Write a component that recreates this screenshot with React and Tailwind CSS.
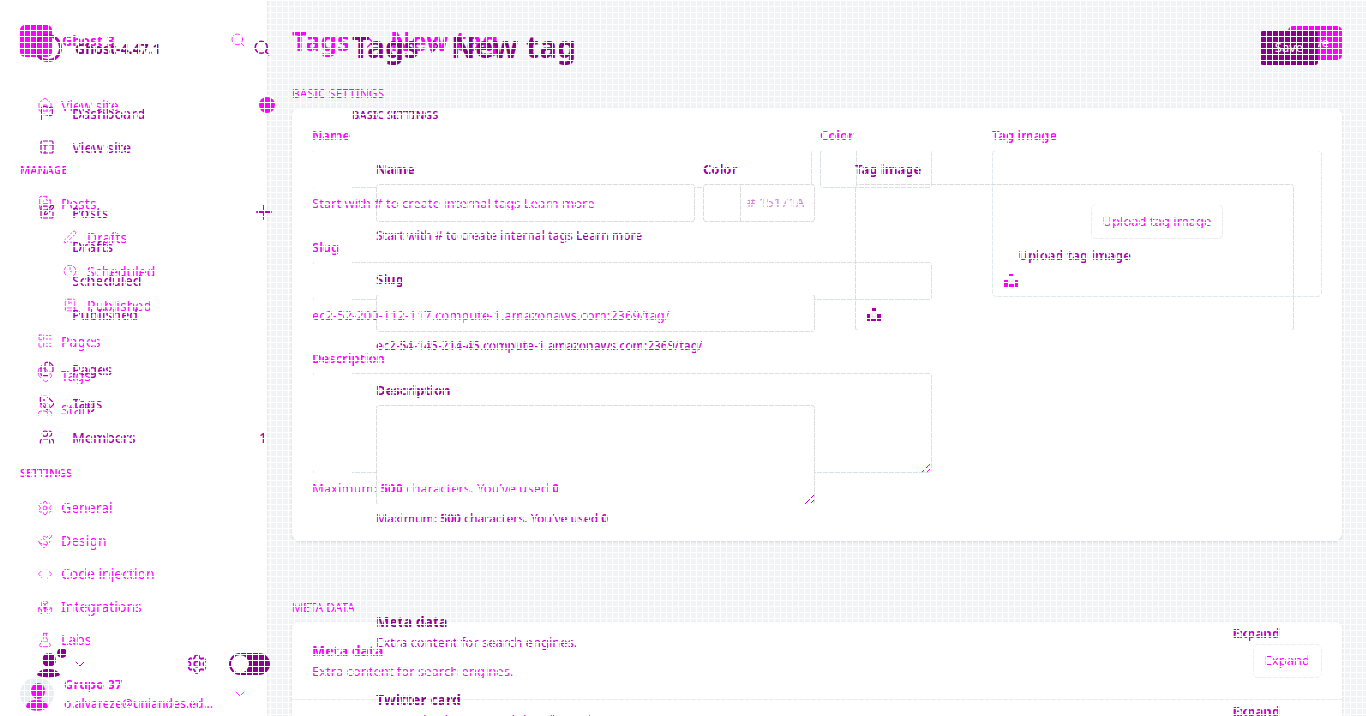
import React from "react";
import {
  Home, Search, FileText, PenLine, Clock, BookMarked, LayoutList, Tag, Users, Settings,
  Paintbrush, Code, Boxes, FlaskConical, Flag, PanelsTopLeft, SquarePen, Files, ChevronDown,
  ChevronRight, Plus,
} from "lucide-react";

const frontLinks = [
  { label: "Posts", icon: FileText },
  { label: "Drafts", icon: PenLine, sub: true },
  { label: "Scheduled", icon: Clock, sub: true },
  { label: "Published", icon: BookMarked, sub: true },
];
const frontMore = [
  { label: "Pages", icon: LayoutList },
  { label: "Tags", icon: Tag },
  { label: "Staff", icon: Users },
];
const frontSettings = [
  { label: "General", icon: Settings },
  { label: "Design", icon: Paintbrush },
  { label: "Code injection", icon: Code },
  { label: "Integrations", icon: Boxes },
  { label: "Labs", icon: FlaskConical },
];

function LightLink({ label, icon: Icon, sub, short }) {
  return (
    <a href="#" className={`flex items-center text-[14px] ${short ? "h-[33px]" : "h-[34px]"} ${sub ? "gap-2.5 pl-[63px]" : "gap-2 pl-[37px]"}`}>
      <Icon className={sub ? "size-[14px]" : "size-4"} strokeWidth={1.2} />
      <span>{label}</span>
    </a>
  );
}

function DarkLink({ label, icon: Icon, end }) {
  return (
    <a href="#" className="flex h-[34px] items-center pl-[39px] text-[14px] font-medium">
      <span className="w-[33px]">{Icon && <Icon className="size-4" strokeWidth={1.8} />}</span>
      <span className="flex-1">{label}</span>
      {end}
    </a>
  );
}

function UploadIcon({ className }) {
  return (
    <svg className={className} width="14" height="14" viewBox="0 0 14 14" fill="currentColor" aria-hidden="true">
      <path d="M5 1h4v3H5zM0 7h4v4H0zM10 7h4v4h-4zM0 11h14v3H0z" />
      <path d="M5 6v4h4V6" fill="none" stroke="#ddd" />
    </svg>
  );
}

function Grip() {
  return (
    <svg className="absolute right-px bottom-px" width="9" height="9" viewBox="0 0 9 9" fill="none" stroke="currentColor" aria-hidden="true">
      <path d="M0 9 9 0M5 9l4-4" />
    </svg>
  );
}

function Fade() {
  return <span className="absolute -top-px -bottom-px left-[2px] w-[38px] bg-white" />;
}

function LightSidebar() {
  return (
    <aside className="relative z-20 flex w-[267px] shrink-0 flex-col text-[#ff00ff]">
      <div className="flex h-[88px] items-start pt-[25px] pl-5">
        <span className="size-8 shrink-0 rounded-[5px] bg-[#ff00ff]" />
        <b className="ml-2.5 flex-1 text-[14px] leading-8">Ghost 3</b>
        <button aria-label="Search" className="mt-[7px] mr-[21px]"><Search className="size-4" strokeWidth={1.2} /></button>
      </div>
      <div className="flex items-center">
        <div className="flex-1"><LightLink label="View site" icon={Home} /></div>
        <span className="-mr-2 size-4 rounded-full bg-[#ff00ff] ring-2 ring-white" />
      </div>
      <h2 className="mt-[39px] mb-[7px] pl-5 text-[11px] leading-[18px] font-semibold">MANAGE</h2>
      <nav>
        {frontLinks.map((l) => <LightLink key={l.label} {...l} />)}
        <div className="mt-0.5">{frontMore.map((l) => <LightLink key={l.label} {...l} />)}</div>
      </nav>
      <h2 className="mt-[38px] mb-[9px] pl-5 text-[11px] leading-[18px] font-semibold">SETTINGS</h2>
      <nav>{frontSettings.map((l) => <LightLink key={l.label} short {...l} />)}</nav>
      <div className="mt-auto flex items-center pb-[3px] pl-5">
        <svg width="34" height="34" viewBox="0 0 34 34" aria-hidden="true">
          <circle cx="17" cy="17" r="17" fill="#e6eef5" />
          <ellipse cx="18" cy="14" rx="7" ry="8" fill="#f0f" />
          <path d="M6 30c1-6 5-7 11-7s10 2 11 7c-5 5-17 5-22 0z" fill="#f0f" />
        </svg>
        <div className="ml-[10px] flex-1 leading-[19px]">
          <b className="block text-[13px]">Grupo 37</b>
          <span className="block text-[12px] font-medium">o.alvareze@uniandes.ed...</span>
        </div>
        <ChevronDown className="mr-[19px] size-4" strokeWidth={1.2} />
      </div>
    </aside>
  );
}

function LightPage() {
  const field = "absolute inset-0 h-full w-full resize-none rounded-[3px] border border-[#d6e1e8] bg-transparent px-2 outline-none";
  const label = "relative z-20 mb-[5px] block w-max text-[13px] leading-5 font-semibold";
  const hint = "relative z-20 mt-[5px] text-[13px] leading-5";
  return (
    <div className="col-start-1 row-start-1 flex h-screen min-w-0 overflow-hidden bg-white">
      <LightSidebar />
      <main className="min-w-0 flex-1 border-l border-[#e8e9ed] bg-[#f1f3f6] px-6 text-[#ff00ff]">
        <header className="flex h-[85px] items-center justify-between">
          <h1 className="flex items-center pb-0.5 text-[26px] font-bold">Tags<ChevronRight className="mx-2.5 size-5" strokeWidth={1.5} />New tag</h1>
          <button className="h-[34px] w-[54px] rounded-[5px] bg-[#ff00ff] text-[13px] text-white">Save</button>
        </header>
        <h2 className="mb-[5px] text-[12px] leading-[18px]">BASIC SETTINGS</h2>
        <section className="flex gap-[60px] rounded-[8px] bg-white px-5 pt-[17px] pb-[43px] shadow-sm">
          <div className="flex-1">
            <div className="flex gap-2">
              <div className="flex-1">
                <label htmlFor="a-name" className={label}>Name</label>
                <div className="relative h-[38px]"><input id="a-name" className={field} /><Fade /></div>
              </div>
              <div className="w-[112px]">
                <label htmlFor="a-color" className={label}>Color</label>
                <div className="relative flex h-[38px]"><input id="a-color" className={field} /><span className="ml-9 border-l border-[#d6e1e8]" /></div>
              </div>
            </div>
            <p className={hint}>Start with # to create internal tags <a href="#">Learn more</a></p>
            <label htmlFor="a-slug" className={`${label} mt-6`}>Slug</label>
            <div className="relative h-[38px]"><input id="a-slug" className={field} /><Fade /></div>
            <p className={hint}>ec2-52-200-112-117.compute-1.amazonaws.com:2369/tag/</p>
            <label htmlFor="a-desc" className={`${label} mt-[23px]`}>Description</label>
            <div className="relative h-[100px]"><textarea id="a-desc" className={field} /><Fade /><Grip /></div>
            <p className={hint}>Maximum: <b>500</b> characters. You’ve used <b>0</b></p>
          </div>
          <div className="w-[330px]">
            <h3 className={label}>Tag image</h3>
            <div className="relative flex h-[147px] items-center justify-center rounded-[4px] border border-[#e0e9ef] pb-1 text-[13px]">
              <button className="relative z-20 h-[35px] rounded-[5px] border border-[#e9edf0] px-[11px]">Upload tag image</button>
              <UploadIcon className="absolute bottom-[9px] left-[11px]" />
            </div>
          </div>
        </section>
        <h2 className="mt-[58px] mb-[5px] text-[12px] leading-[18px]">META DATA</h2>
        <section className="h-[110px] rounded-t-[6px] bg-white shadow-sm">
          <div className="flex h-[78px] items-center justify-between border-b border-[#e9eaed] px-5">
            <div className="leading-5">
              <h3 className="text-[14px] font-bold">Meta data</h3>
              <p className="text-[13px]">Extra content for search engines.</p>
            </div>
            <button className="h-[34px] rounded-[5px] border border-[#edf0f2] px-[11px] text-[13px]">Expand</button>
          </div>
        </section>
      </main>
    </div>
  );
}

function DarkSidebar() {
  return (
    <aside className="flex w-[272px] shrink-0 flex-col text-[#a800a8]">
      <div className="flex h-24 items-center pl-[34px]">
        <span className="size-7 rounded-full border-[3px] border-[#c000c0]" />
        <b className="ml-[13px] flex-1 text-[14px] text-[#8b008b]">Ghost-4.47.1</b>
        <button aria-label="Search site" className="mr-px"><Search className="size-[18px]" strokeWidth={2.2} /></button>
      </div>
      <nav>
        <DarkLink label="Dashboard" icon={Flag} />
        <DarkLink label="View site" icon={PanelsTopLeft} />
      </nav>
      <nav className="mt-[31px]">
        <DarkLink label="Posts" icon={SquarePen} end={<Plus className="-mr-1 size-6 text-[#c000c0]" strokeWidth={2} />} />
        <DarkLink label="Drafts" />
        <DarkLink label="Scheduled" />
        <DarkLink label="Published" />
      </nav>
      <nav className="mt-[21px]">
        <DarkLink label="Pages" icon={Files} />
        <DarkLink label="Tags" icon={Tag} />
        <DarkLink label="Members" icon={Users} end={<span className="mr-[5px]">1</span>} />
      </nav>
      <div className="mt-auto mb-7 flex h-12 items-center pl-9">
        <svg width="32" height="32" viewBox="0 0 32 32" fill="#8b008b" aria-hidden="true">
          <circle cx="13" cy="12" r="7" /><circle cx="26" cy="5" r="5" />
          <path d="M1 27c2-5 6-6 11-6s10 1 12 6c-3 3-20 3-23 0z" />
        </svg>
        <ChevronDown className="ml-1 size-4" strokeWidth={1.5} />
        <button aria-label="Settings" className="mr-[21px] ml-auto"><Settings className="size-[22px] text-[#c000c0]" strokeWidth={2} /></button>
        <button aria-label="Night mode" className="mr-0.5 h-[22px] w-[41px] rounded-full bg-[#8b008b] p-0.5">
          <span className="block size-[18px] rounded-full bg-white" />
        </button>
      </div>
    </aside>
  );
}

function MetaRow({ title, text }) {
  return (
    <div className="flex h-[78px] items-start justify-between">
      <div className="leading-5">
        <h3 className="text-[14px] font-bold text-[#8b008b]">{title}</h3>
        <p className="text-[13px]">{text}</p>
      </div>
      <button className="mt-[11px] mr-[38px] text-[13px] leading-5 font-bold">Expand</button>
    </div>
  );
}

function DarkPage() {
  const field = "relative z-10 block w-full resize-none rounded-[3px] border border-[#dcdcdc] bg-white px-2 outline-none";
  const label = "relative z-20 mb-[5px] block w-max text-[13px] leading-5 font-bold text-[#9a009a]";
  const hint = "relative z-20 mt-1 text-[12px] leading-5 font-medium";
  return (
    <div className="relative col-start-1 row-start-1 flex h-screen min-w-0 overflow-hidden">
      <div className="relative z-30 flex"><DarkSidebar /></div>
      <main className="min-w-0 flex-1 pr-12 pl-20 text-[#c000c0]">
        <header className="relative z-30 flex h-24 items-center justify-between text-[#8b008b]">
          <h1 className="flex items-center pb-1 text-[30px] font-bold">Tags<ChevronRight className="mx-1 size-6" strokeWidth={1.5} />New tag</h1>
          <button className="h-[34px] w-[58px] rounded-[3px] bg-[#8b008b] text-[13px] text-white">Save</button>
        </header>
        <h2 className="relative z-20 mt-2.5 text-[11px] leading-[18px] font-semibold text-[#9a009a]">BASIC SETTINGS</h2>
        <section className="mt-[35px] grid grid-cols-2 gap-10 px-6">
          <div>
            <div className="flex gap-2">
              <div className="flex-1">
                <label htmlFor="b-name" className={label}>Name</label>
                <input id="b-name" className={`${field} h-[38px]`} />
              </div>
              <div className="w-[112px]">
                <label htmlFor="b-color" className={label}>Color</label>
                <div className="relative z-10 flex h-[38px] rounded-[3px] border border-[#dcdcdc] bg-white">
                  <span className="w-9 shrink-0" />
                  <input id="b-color" defaultValue="# 15171A" className="w-full min-w-0 border-l border-[#dcdcdc] bg-transparent px-1.5 text-[13px] text-[#d77bd7] outline-none" />
                </div>
              </div>
            </div>
            <p className={hint}>Start with # to create internal tags <a href="#" className="text-[#9a009a]">Learn more</a></p>
            <label htmlFor="b-slug" className={`${label} mt-[23px]`}>Slug</label>
            <input id="b-slug" className={`${field} h-[38px]`} />
            <p className={hint}>ec2-54-145-214-45.compute-1.amazonaws.com:2369/tag/</p>
            <label htmlFor="b-desc" className={`${label} mt-6`}>Description</label>
            <div className="relative">
              <textarea id="b-desc" className={`${field} h-[100px]`} />
              <div className="relative z-20"><Grip /></div>
            </div>
            <p className={hint}>Maximum: <b>500</b> characters. You’ve used <b>0</b></p>
          </div>
          <div>
            <h3 className={label}>Tag image</h3>
            <div className="relative flex h-[147px] items-center justify-center rounded-[3px] border border-[#dcdcdc] pb-1 text-[#a800a8]">
              <button className="relative z-20 text-[13px] font-semibold">Upload tag image</button>
              <UploadIcon className="absolute bottom-[9px] left-[11px]" />
            </div>
          </div>
        </section>
        <section className="relative z-30 mt-[83px] pl-6">
          <MetaRow title="Meta data" text="Extra content for search engines." />
          <MetaRow title="Twitter card" text="Customized structured data for Twitter" />
        </section>
      </main>
    </div>
  );
}

export default function App() {
  return (
    <div className="relative grid h-screen grid-cols-1 overflow-hidden font-['Noto_Sans',sans-serif]">
      <LightPage />
      <DarkPage />
      <div className="pointer-events-none absolute inset-0 z-50 bg-[linear-gradient(to_right,white_1px,transparent_1px),linear-gradient(to_bottom,white_1px,transparent_1px)] bg-[size:6px_6px]" />
    </div>
  );
}
